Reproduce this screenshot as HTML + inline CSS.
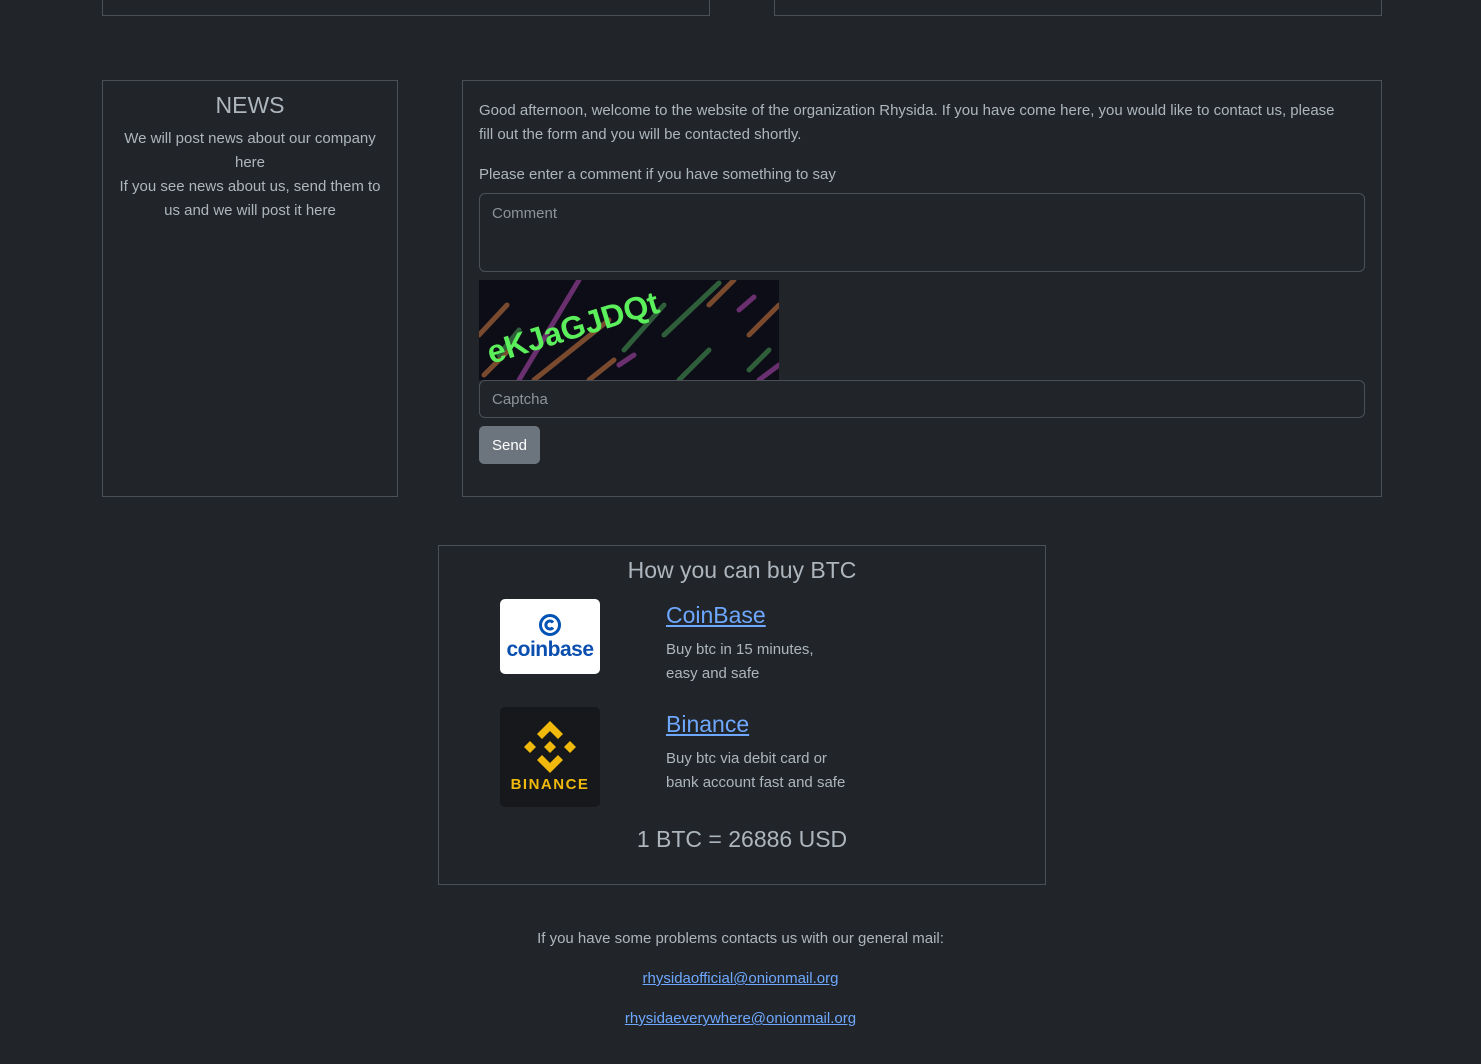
<!DOCTYPE html>
<html><head><meta charset="utf-8"><style>
*{box-sizing:border-box;margin:0;padding:0}
body{width:1481px;height:1064px;background:#212529;color:#adb5bd;font-family:"Liberation Sans",sans-serif;font-size:15px;position:relative;overflow:hidden}
.box{position:absolute;border:1px solid #495057}
a{color:#6ea8fe}
.in{position:absolute;border:1px solid #495057;border-radius:6px;background:#212529;color:#8c939a;padding:0 12px;font-size:15px}
</style></head><body>
<div class="box" style="left:102px;top:-10px;width:608px;height:26px"></div>
<div class="box" style="left:774px;top:-10px;width:608px;height:26px"></div>

<div class="box" style="left:102px;top:80px;width:296px;height:417px;text-align:center">
<div style="font-size:23px;margin-top:11px;color:#adb5bd">NEWS</div>
<div style="line-height:24px;margin-top:8px;padding:0 8px">We will post news about our company here<br>If you see news about us, send them to us and we will post it here</div>
</div>

<div class="box" style="left:462px;top:80px;width:920px;height:417px">
<div style="position:absolute;left:16px;top:18px;width:870px;line-height:24px">Good afternoon, welcome to the website of the organization Rhysida. If you have come here, you would like to contact us, please fill out the form and you will be contacted shortly.</div>
<div style="position:absolute;left:16px;top:82px;line-height:24px">Please enter a comment if you have something to say</div>
<div class="in" style="left:16px;top:112px;width:886px;height:79px;padding-top:11px">Comment</div>
<svg style="position:absolute;left:16px;top:199px" width="300" height="100">
<rect width="300" height="100" fill="#0d0d17"/>
<g stroke-width="5" stroke-linecap="round">
<line x1="0" y1="55" x2="28" y2="25" stroke="#7a4a2e"/>
<line x1="40" y1="100" x2="100" y2="0" stroke="#6a2f6e"/>
<line x1="5" y1="95" x2="30" y2="70" stroke="#7a4a2e"/>
<line x1="20" y1="75" x2="40" y2="50" stroke="#2f5e3a"/>
<line x1="55" y1="100" x2="130" y2="40" stroke="#7a4a2e"/>
<line x1="110" y1="100" x2="135" y2="80" stroke="#7a4a2e"/>
<line x1="145" y1="70" x2="185" y2="25" stroke="#2f5e3a"/>
<line x1="140" y1="85" x2="155" y2="75" stroke="#6a2f6e"/>
<line x1="185" y1="55" x2="240" y2="3" stroke="#2f5e3a"/>
<line x1="230" y1="25" x2="255" y2="0" stroke="#7a4a2e"/>
<line x1="260" y1="30" x2="275" y2="17" stroke="#6a2f6e"/>
<line x1="200" y1="100" x2="230" y2="70" stroke="#2f5e3a"/>
<line x1="270" y1="55" x2="300" y2="25" stroke="#7a4a2e"/>
<line x1="270" y1="90" x2="290" y2="70" stroke="#2f5e3a"/>
<line x1="280" y1="100" x2="300" y2="85" stroke="#6a2f6e"/>
</g>
<text x="12" y="84" transform="rotate(-17 12 84)" fill="#5cef5c" font-family="Liberation Sans" font-weight="bold" font-size="32">eKJaGJDQt</text>
</svg>
<div class="in" style="left:16px;top:299px;width:886px;height:38px;line-height:37px">Captcha</div>
<div style="position:absolute;left:16px;top:345px;width:61px;height:38px;background:#6c757d;color:#fff;border-radius:5px;text-align:center;line-height:39px">Send</div>
</div>

<div class="box" style="left:438px;top:545px;width:608px;height:340px">
<div style="position:absolute;left:0;right:0;top:11px;text-align:center;font-size:23px;color:#adb5bd">How you can buy BTC</div>
<div style="position:absolute;left:61px;top:53px;width:100px;height:75px;background:#fff;border-radius:5px;text-align:center">
<svg width="24" height="24" style="margin-top:14px" viewBox="0 0 24 24"><circle cx="12" cy="12" r="9.5" fill="none" stroke="#0052b4" stroke-width="3"/><path d="M15 9.5a4 4 0 1 0 0 5" fill="none" stroke="#0052b4" stroke-width="3"/></svg>
<div style="color:#0a4fb0;font-weight:bold;font-size:21px;line-height:18px;margin-top:0px;letter-spacing:-0.5px">coinbase</div>
</div>
<a href="#" style="position:absolute;left:227px;top:56px;font-size:23px">CoinBase</a>
<div style="position:absolute;left:227px;top:92px;line-height:24px">Buy btc in 15 minutes,<br>easy and safe</div>
<div style="position:absolute;left:61px;top:161px;width:100px;height:100px;background:#16181b;border-radius:5px;text-align:center">
<svg width="56" height="56" style="margin-top:12px" viewBox="0 0 56 56" fill="#f0b90b"><path d="M28 2L41 15 36 20 28 12 20 20 15 15Z"/><path d="M28 54L41 41 36 36 28 44 20 36 15 41Z"/><path d="M2 28l6-6 6 6-6 6z"/><path d="M42 28l6-6 6 6-6 6z"/><path d="M28 22l6 6-6 6-6-6z"/></svg>
<div style="color:#f0b90b;font-weight:bold;font-size:15px;letter-spacing:1.5px;margin-top:-3px">BINANCE</div>
</div>
<a href="#" style="position:absolute;left:227px;top:165px;font-size:23px">Binance</a>
<div style="position:absolute;left:227px;top:201px;line-height:24px">Buy btc via debit card or<br>bank account fast and safe</div>
<div style="position:absolute;left:0;right:0;top:280px;text-align:center;font-size:23px;color:#adb5bd">1 BTC = 26886 USD</div>
</div>

<div style="position:absolute;left:0;width:1481px;top:930px;text-align:center">If you have some problems contacts us with our general mail:</div>
<div style="position:absolute;left:0;width:1481px;top:970px;text-align:center"><a href="#">rhysidaofficial@onionmail.org</a></div>
<div style="position:absolute;left:0;width:1481px;top:1010px;text-align:center"><a href="#">rhysidaeverywhere@onionmail.org</a></div>
</body></html>
